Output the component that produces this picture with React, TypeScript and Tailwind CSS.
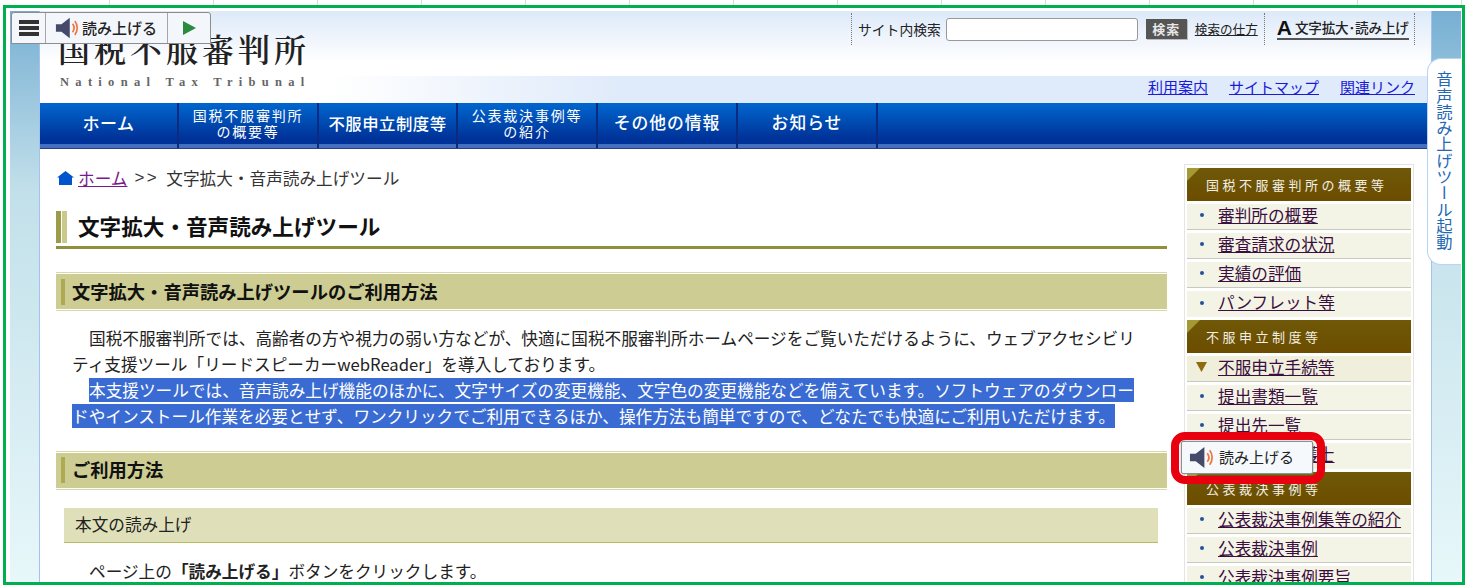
import React from "react";

const jp = "font-['Noto_Sans_CJK_JP','Noto_Sans',sans-serif]";

function Speaker({ size = 26 }: { size?: number }) {
  return (
    <svg width={size} height={size} viewBox="0 0 26 26" className="shrink-0">
      <path d="M1 9h6L16 2v22l-9-7H1z" fill="#454a6b" />
      <path d="M19 8.5c2 2.6 2 6.4 0 9" fill="none" stroke="#f0743c" strokeWidth="1.8" />
      <path d="M21.5 5.5c3.4 4.2 3.4 10.8 0 15" fill="none" stroke="#f0743c" strokeWidth="1.8" />
    </svg>
  );
}

function SideHead({ children }: { children: React.ReactNode }) {
  return (
    <div className="relative h-[33px] mt-[3px] flex items-center pl-[19px] text-[13px] tracking-[3.5px] text-[#f1efe3] bg-gradient-to-b from-[#6f5808] to-[#6c4d00] overflow-hidden whitespace-nowrap">
      <svg width="13" height="13" viewBox="0 0 13 13" className="absolute left-0 top-0">
        <path d="M0 0h13L0 13z" fill="#a39a35" />
      </svg>
      {children}
    </div>
  );
}

function SideItem({ children, active, last }: { children: React.ReactNode; active?: boolean; last?: boolean }) {
  return (
    <div className={`h-[26px] mt-[3px] flex items-center pl-[13px] pb-[3px] text-[16.65px] text-[#3a0f3f] ${active ? "bg-[#f0efdc]" : "bg-[#f4f4e6]"} ${last ? "" : "border-b border-[#c9c9c4]"}`}>
      {active ? (
        <svg width="11" height="10" viewBox="0 0 11 10" className="mr-[11px] -ml-[4px] shrink-0">
          <path d="M0 0h11L5.5 10z" fill="#8f6a10" />
        </svg>
      ) : (
        <span className="w-[4px] h-[4px] rounded-full bg-[#24519c] mr-[14px] shrink-0" />
      )}
      <span className="underline whitespace-nowrap leading-none">{children}</span>
    </div>
  );
}

function Section({ children, className }: { children: React.ReactNode; className?: string }) {
  return (
    <div className={`h-[39px] border-t border-b border-[#d9d9a8] py-[1px] ${className ?? ""}`}>
      <div className="h-full bg-[#cdcc92] flex items-center pl-[5px]">
        <span className="w-[4px] h-[26px] bg-[#adab52] mr-[7px]" />
        <span className="font-bold text-[18.3px] leading-[24px] pb-[2px] text-[#111] whitespace-nowrap">{children}</span>
      </div>
    </div>
  );
}

const navItems: { label: React.ReactNode; cls: string; w: string }[] = [
  { label: "ホーム", w: "w-[139px]", cls: "text-[17px] tracking-[0.5px] font-medium" },
  { label: <>国税不服審判所<br />の概要等</>, w: "w-[140px]", cls: "text-[14px] leading-[16px] tracking-[1.8px]" },
  { label: "不服申立制度等", w: "w-[139px]", cls: "text-[16.4px] tracking-[0.5px] font-medium" },
  { label: <>公表裁決事例等<br />の紹介</>, w: "w-[140px]", cls: "text-[14px] leading-[16px] tracking-[1.8px]" },
  { label: "その他の情報", w: "w-[140px]", cls: "text-[16.8px] tracking-[1px] font-medium" },
  { label: "お知らせ", w: "w-[140px]", cls: "text-[16.8px] tracking-[1px] font-medium" },
];

export default function App() {
  return (
    <div className={`relative w-[1466px] h-[585px] overflow-hidden bg-white ${jp}`}>
      {/* spreadsheet cells behind the frame */}
      <div className="flex h-[5px]">
        <div className="w-[110px] border-r border-[#d8d8d8]" />
        {Array.from({ length: 13 }).map((_, i) => (
          <div key={i} className="w-[104px] border-r border-[#d8d8d8]" />
        ))}
      </div>

      {/* green frame */}
      <div className="ml-[3px] w-[1462px] h-[580px] border-[3px] border-[#00b050] bg-white flex pl-[4px] pt-[3px] overflow-hidden">
        {/* left strip */}
        <div className="w-[30px] h-[600px] shrink-0 border-r border-[#a3c2f0] bg-gradient-to-b from-[#77afd3] via-[#c2e0ea] via-30% to-[#eaf9fb]" />

        {/* centre */}
        <div className="w-[1391px] shrink-0">
          {/* header */}
          <header className="h-[92px] bg-gradient-to-b from-[#dde9f9] to-white to-55% flex flex-col">
            <div className="flex h-[65px]">
              <div className="relative z-10 pl-[18px] pt-[18px] w-[811px] shrink-0">
                <div className="font-['Noto_Serif_CJK_JP','Liberation_Serif','Noto_Sans_CJK_JP',serif] font-semibold text-[32px] leading-[38px] tracking-[4px] text-[#222] whitespace-nowrap">国税不服審判所</div>
                <div className="font-['Liberation_Serif',serif] font-bold text-[12.5px] leading-[14px] tracking-[6.3px] text-[#666] whitespace-nowrap mt-[8px] ml-[2px]">National Tax Tribunal</div>
              </div>
              <div className="flex items-start pt-[2px]">
                <div className="flex items-center h-[32px] border-l border-dotted border-[#777] pl-[6px]">
                  <span className="text-[13.8px] text-[#222] whitespace-nowrap">サイト内検索</span>
                  <input className="ml-[5px] w-[192px] h-[23px] bg-white border border-[#999] rounded-[3px]" />
                  <span className="ml-[8px] w-[41px] h-[20px] bg-[#555] shadow-[1px_1px_0_#bbb] flex items-center justify-center text-[13px] text-[#e8e8e8] tracking-[1px] font-bold">検索</span>
                  <span className="ml-[8px] text-[12.6px] text-[#222] underline whitespace-nowrap">検索の仕方</span>
                </div>
                <div className="ml-[6px] h-[32px] border-l border-r border-dotted border-[#777] pl-[12px] pr-[5px] flex items-center">
                  <span className="flex items-center border-b-2 border-[#555] pb-[1px] whitespace-nowrap">
                    <span className="font-['Liberation_Sans',sans-serif] font-bold text-[21px] leading-[19px] text-[#111] mr-[3px]">A</span>
                    <span className="text-[13.6px] leading-[19px] text-[#222] font-medium tracking-[-0.2px]">文字拡大･読み上げ</span>
                  </span>
                </div>
              </div>
            </div>
            <div className="h-[27px] flex items-center justify-end gap-[21px] pr-[16px] pb-[4px] text-[15px] text-[#1a1ad8] bg-gradient-to-r from-white from-[21%] to-[#dfeafa] to-[42%]">
              <span className="underline">利用案内</span>
              <span className="underline">サイトマップ</span>
              <span className="underline">関連リンク</span>
            </div>
          </header>

          {/* navigation */}
          <nav className="h-[45px] flex bg-gradient-to-b from-[#0064cc] from-5% to-[#003399] to-85% border-b-[4px] border-b-[#4470c2] shadow-[0_1px_0_#2b3f7d]">
            {navItems.map((n, i) => (
              <div key={i} className={`${n.w} h-[45px] shrink-0 border-r-2 border-[#0b2a80] flex items-center justify-center text-center text-white pb-[5px] ${n.cls}`}>
                <span>{n.label}</span>
              </div>
            ))}
          </nav>

          {/* body */}
          <div className="flex pt-[16px]">
            <main className="ml-[16px] w-[1111px] shrink-0">
              <div className="h-[24px] pt-[2px] box-content flex items-center text-[16.65px] text-[#333] whitespace-nowrap">
                <svg width="17" height="14" viewBox="0 0 17 14" className="ml-[1px] mr-[4px]">
                  <path d="M8.5 0L17 6.5h-2V14H2V6.5H0z" fill="#0055cc" />
                </svg>
                <span className="underline text-[#7a1a8a]">ホーム</span>
                <span className="ml-[7px] font-['Liberation_Sans',sans-serif] text-[17px] tracking-[2.5px]">&gt;&gt;</span>
                <span className="ml-[7px]">文字拡大・音声読み上げツール</span>
              </div>

              <div className="mt-[21px] h-[38px] border-b-[3px] border-[#8f8f3c] flex items-start">
                <span className="w-[5px] h-[32px] bg-[#9c9c48]" />
                <span className="w-[1px]" />
                <span className="w-[5px] h-[32px] bg-[#c9c98b]" />
                <span className="ml-[11px] font-bold text-[21.6px] leading-[30px] text-[#111] whitespace-nowrap">文字拡大・音声読み上げツール</span>
              </div>

              <Section className="mt-[23px]">文字拡大・音声読み上げツールのご利用方法</Section>

              <div className="mt-[15px] pl-[16px] text-[16.65px] leading-[25.9px] text-[#222] whitespace-nowrap">
                <div className="pl-[17px]">国税不服審判所では、高齢者の方や視力の弱い方などが、快適に国税不服審判所ホームページをご覧いただけるように、ウェブアクセシビリ</div>
                <div>ティ支援ツール「リードスピーカーwebReader」を導入しております。</div>
                <div className="pl-[17px]"><span className="bg-[#3a6bd3] text-white">本支援ツールでは、音声読み上げ機能のほかに、文字サイズの変更機能、文字色の変更機能などを備えています。ソフトウェアのダウンロー</span></div>
                <div><span className="bg-[#3a6bd3] text-white">ドやインストール作業を必要とせず、ワンクリックでご利用できるほか、操作方法も簡単ですので、どなたでも快適にご利用いただけます。</span></div>
              </div>

              <Section className="mt-[21px]">ご利用方法</Section>

              <div className="ml-[8px] mr-[9px] mt-[18px] h-[35px] bg-[#dfe0b9] border-b border-[#b9bd62] flex items-center pl-[11px] text-[16.65px] text-[#222]">本文の読み上げ</div>

              <div className="mt-[16px] pl-[33px] text-[16.65px] text-[#222] whitespace-nowrap">
                ページ上の<span className="font-bold">「読み上げる」</span>ボタンをクリックします。
              </div>
            </main>

            {/* side menu */}
            <aside className="ml-[17px] w-[230px] h-[440px] shrink-0 border border-[#e4e4e0] px-[2px]">
              <SideHead>国税不服審判所の概要等</SideHead>
              <SideItem>審判所の概要</SideItem>
              <SideItem>審査請求の状況</SideItem>
              <SideItem>実績の評価</SideItem>
              <SideItem last>パンフレット等</SideItem>
              <SideHead>不服申立制度等</SideHead>
              <SideItem active>不服申立手続等</SideItem>
              <SideItem>提出書類一覧</SideItem>
              <SideItem>提出先一覧</SideItem>
              <SideItem last>税理士・弁護士</SideItem>
              <SideHead>公表裁決事例等</SideHead>
              <SideItem>公表裁決事例集等の紹介</SideItem>
              <SideItem>公表裁決事例</SideItem>
              <SideItem>公表裁決事例要旨</SideItem>
            </aside>
          </div>
        </div>

        {/* right strip */}
        <div className="w-[30px] h-[600px] shrink-0 border-l border-[#a3c2f0] bg-gradient-to-b from-[#77afd3] via-[#c2e0ea] via-30% to-[#eaf9fb]" />
      </div>

      {/* reader toolbar */}
      <div className="absolute z-20 left-[11px] top-[12px] h-[32px] w-[200px] flex bg-[#f3f7fb] border border-[#8d8d8d] rounded-t-[3px]">
        <div className="w-[34px] border-r border-[#a5a5a5] flex flex-col items-center justify-center gap-[2px]">
          <span className="w-[20px] h-[4px] bg-[#333]" />
          <span className="w-[20px] h-[4px] bg-[#333]" />
          <span className="w-[20px] h-[4px] bg-[#333]" />
        </div>
        <div className="w-[122px] border-r border-[#a5a5a5] flex items-center pl-[9px] gap-[3px] text-[15px] font-medium text-[#222]">
          <Speaker size={24} />
          <span className="whitespace-nowrap">読み上げる</span>
        </div>
        <div className="flex-1 flex items-center justify-center">
          <svg width="13" height="14" viewBox="0 0 13 14"><path d="M0 0l13 7-13 7z" fill="#2a8a3e" /></svg>
        </div>
      </div>

      {/* launcher tab */}
      <div className="absolute left-[1427px] top-[58px] w-[34px] h-[207px] bg-white border border-[#b9d3f2] border-r-0 rounded-l-[14px] flex items-start justify-center pt-[12px]">
        <span className="[writing-mode:vertical-rl] text-[16.3px] leading-[18px] text-[#2468b4] whitespace-nowrap">音声読み上げツール起動</span>
      </div>

      {/* highlighted popup */}
      <div className="absolute left-[1171px] top-[432px] w-[154px] h-[52px] border-[8px] border-[#e8000f] rounded-[14px]" />
      <div className="absolute left-[1181px] top-[441px] w-[132px] h-[33px] bg-[#f5f9fc] border border-[#8f8f8f] rounded-[2px] shadow-[0_0_2px_#999] flex items-center pl-[7px] gap-[5px] text-[15px] text-[#222]">
        <Speaker size={25} />
        <span className="whitespace-nowrap">読み上げる</span>
      </div>
    </div>
  );
}
